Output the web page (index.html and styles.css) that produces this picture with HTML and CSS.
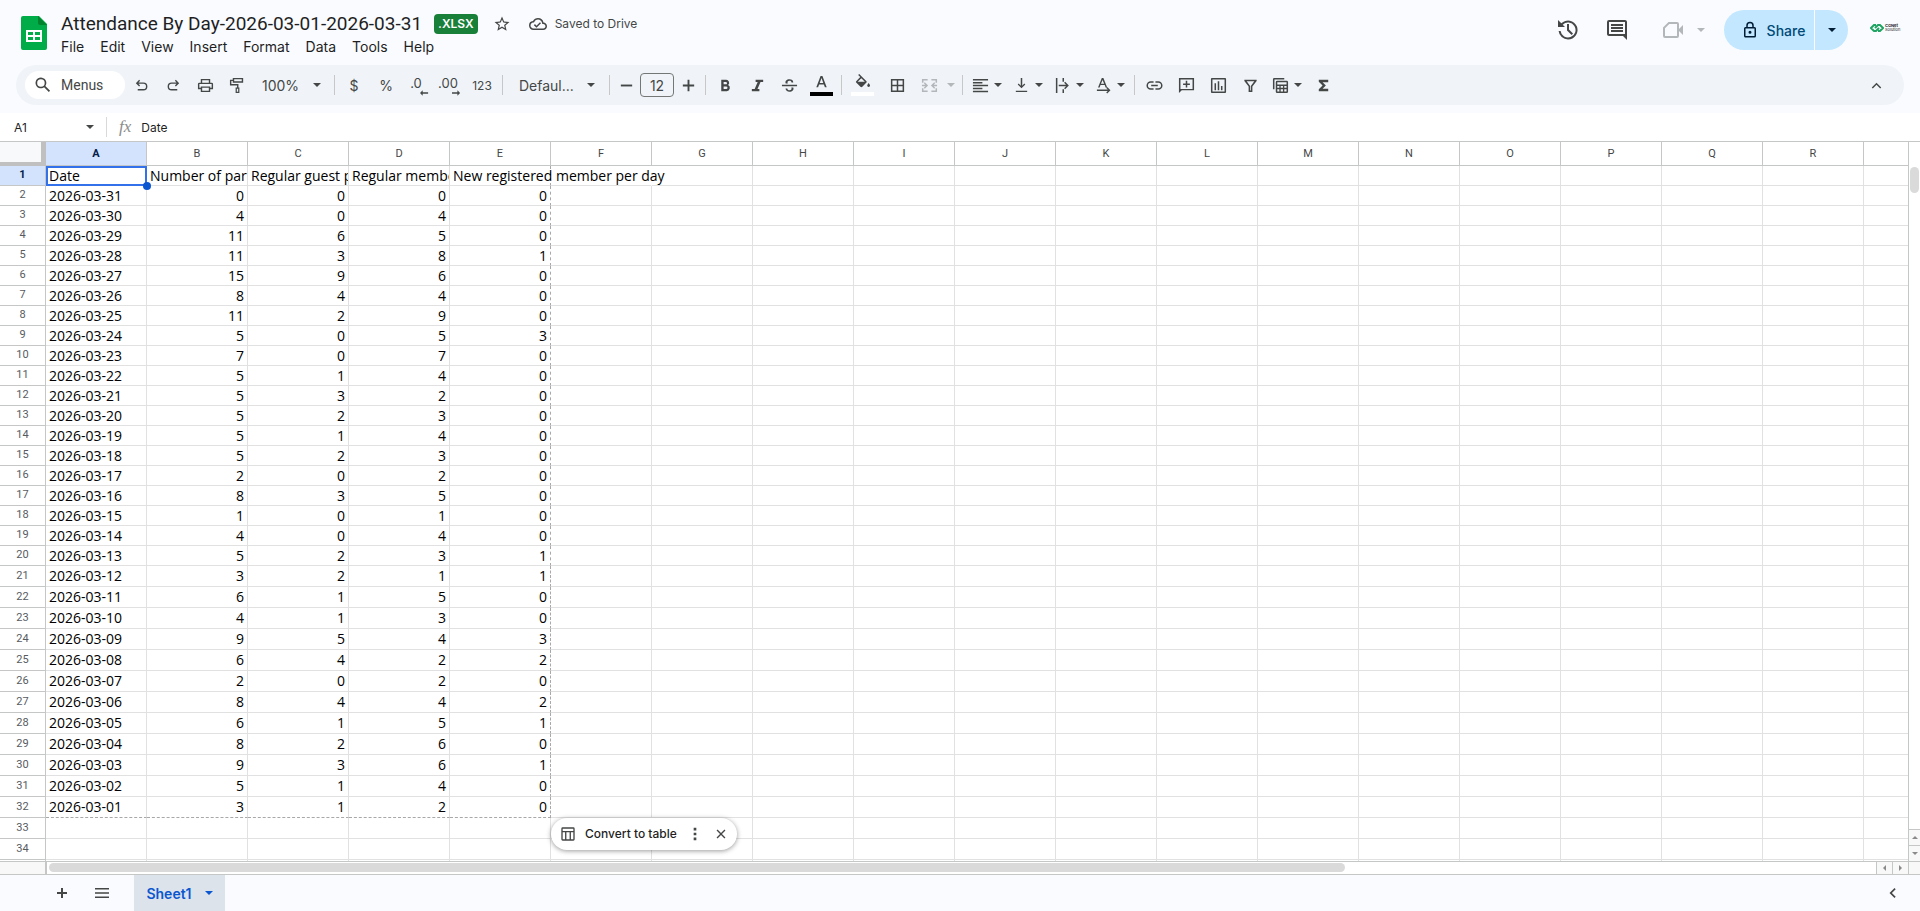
FILE: index.html
```html
<!DOCTYPE html>
<html lang="en">

<head>
    <meta charset="UTF-8">
    <meta name="viewport" content="width=device-width, initial-scale=1.0">
    <title>Attendance By Day-2026-03-01-2026-03-31</title>
    <link rel="stylesheet" href="styles.css">
</head>

<body>

    <header class="top-bar">
        <svg class="sheets-logo" viewBox="0 0 26 34">
            <path fill="#00ac47" d="M2 0h16l8 8v24a2 2 0 0 1-2 2H2a2 2 0 0 1-2-2V2a2 2 0 0 1 2-2z" />
            <path fill="#00832d" d="M17 0l9 9h-7a2 2 0 0 1-2-2z" />
            <path fill="#fff" fill-rule="evenodd" d="M5 14h16v12H5zM7 16v3h5v-3zM14 16v3h5v-3zM7 21v3h5v-3zM14 21v3h5v-3z" />
        </svg>
        <div class="doc-info">
            <div class="title-row">
                <h1>Attendance By Day-2026-03-01-2026-03-31</h1>
                <span class="badge">.XLSX</span>
                <button class="star" aria-label="Star">
                    <svg width="18" height="18" viewBox="0 0 24 24"><path d="M22 9.24l-7.19-.62L12 2 9.19 8.63 2 9.24l5.46 4.73L5.82 21 12 17.27 18.18 21l-1.63-7.03L22 9.24zM12 15.4l-3.76 2.27 1-4.28-3.32-2.88 4.38-.38L12 6.1l1.71 4.04 4.38.38-3.32 2.88 1 4.28L12 15.4z" /></svg>
                </button>
                <svg class="cloud" width="18" height="18" viewBox="0 0 24 24"><path d="M19.35 10.04A7.49 7.49 0 0 0 12 4C9.11 4 6.6 5.64 5.35 8.04A5.994 5.994 0 0 0 0 14c0 3.31 2.69 6 6 6h13c2.76 0 5-2.24 5-5 0-2.64-2.05-4.78-4.65-4.96zM19 18H6c-2.21 0-4-1.79-4-4 0-2.05 1.53-3.76 3.56-3.97l1.07-.11.5-.95A5.469 5.469 0 0 1 12 6c2.62 0 4.88 1.86 5.39 4.43l.3 1.5 1.53.11A2.98 2.98 0 0 1 22 15c0 1.65-1.35 3-3 3zm-9-3.82l-2.09-2.09L6.5 13.5 10 17l6.01-6.01-1.41-1.41z" /></svg>
                <span class="saved">Saved to Drive</span>
            </div>
            <nav class="menu-bar">
                <button>File</button>
                <button>Edit</button>
                <button>View</button>
                <button>Insert</button>
                <button>Format</button>
                <button>Data</button>
                <button>Tools</button>
                <button>Help</button>
            </nav>
        </div>
        <div class="top-actions">
            <button aria-label="Version history">
                <svg width="24" height="24" viewBox="0 0 24 24"><path d="M12 21.5a9.5 9.5 0 0 1-9.4-8.5h2a7.5 7.5 0 1 0 2.1-6.2L9 9H2V2l3.3 3.3A9.5 9.5 0 1 1 12 21.5zM15.6 17L11 12.4V6h2v5.6l4 4z" /></svg>
            </button>
            <button aria-label="Comments">
                <svg width="24" height="24" viewBox="0 0 24 24"><path d="M22 4c0-1.100-.9-2-2-2H4a2 2 0 0 0-2 2v12c0 1.100.9 2 2 2h14l4 4V4zM20 16H4V4h16v12zM6 12h12v2H6zM6 9h12v2H6zM6 6h12v2H6z" /></svg>
            </button>
            <button class="meet" aria-label="Join a call">
                <svg width="24" height="24" viewBox="0 0 24 24"><path d="M7.500 4H16a2 2 0 0 1 2 2v12a2 2 0 0 1-2 2H4a2 2 0 0 1-2-2V9.500zM8.300 6L4 10.300V18h12V6zM18 11l4-4v10l-4-4z" /></svg>
                <i class="caret"></i>
            </button>
            <div class="share">
                <button class="share-main">
                    <svg width="20" height="20" viewBox="0 0 24 24"><path d="M18 8h-1V6A5 5 0 0 0 7 6v2H6a2 2 0 0 0-2 2v10c0 1.100.9 2 2 2h12a2 2 0 0 0 2-2V10a2 2 0 0 0-2-2zM9 6a3 3 0 0 1 6 0v2H9zM18 20H6V10h12zM12 17a2 2 0 1 0 0-4 2 2 0 0 0 0 4z" /></svg>
                    Share
                </button>
                <button class="share-more" aria-label="Share options"><i class="caret"></i></button>
            </div>
            <div class="account">
                <svg width="14" height="8" viewBox="0 0 14 8" fill="none" stroke="#1fa463" stroke-width="2"><path fill="none" d="M6 1H4L1 4l3 3h2l3-3M8 7h2l3-3-3-3H8L5 4" /></svg>
                <p><b>CGNet</b><span>Solution</span></p>
            </div>
        </div>
    </header>

    <div class="toolbar">
        <label class="search">
            <svg width="20" height="20" viewBox="0 0 24 24"><path d="M20.500 19l-5.700-5.700a6.500 6.500 0 1 0-1.500 1.500l5.700 5.700zM9.500 14a4.500 4.500 0 1 1 0-9 4.500 4.500 0 0 1 0 9z" /></svg>
            <input type="text" placeholder="Menus" aria-label="Menus">
        </label>
        <button aria-label="Undo"><svg viewBox="0 0 18 18"><path d="M6.500 3L3 6.500 6.500 10l1-1-1.700-1.750H11a2.750 2.750 0 0 1 0 5.500H5v1.500h6a4.250 4.250 0 0 0 0-8.500H5.800L7.500 4z" /></svg></button>
        <button aria-label="Redo"><svg viewBox="0 0 18 18"><path d="M11.500 3L15 6.500 11.500 10l-1-1 1.700-1.750H7a2.750 2.750 0 0 0 0 5.500h6v1.500H7a4.250 4.250 0 0 1 0-8.500h5.200L10.500 4z" /></svg></button>
        <button aria-label="Print"><svg viewBox="0 0 18 18"><path fill-rule="evenodd" d="M4 2h10v4h1.500A1.500 1.500 0 0 1 17 7.500V13h-3v3H4v-3H1V7.500A1.500 1.500 0 0 1 2.500 6H4zM5.500 3.500V6h7V3.500zM2.500 7.500v4H4V10h10v1.500h1.500v-4zM5.500 11.500v3h7v-3z" /></svg></button>
        <button aria-label="Paint format"><svg viewBox="0 0 18 18"><path fill-rule="evenodd" d="M4 1h11v5H4V4.300H2.500v3.200H10V11h1v6H7v-6h1.500V9H1V2.800h3zM5.500 2.500v2h8v-2zM8.300 12.400v3.200h1.400v-3.200z" /></svg></button>
        <button class="drop zoom">100% <i class="caret"></i></button>
        <hr>
        <button class="text">$</button>
        <button class="text">%</button>
        <button class="text decimal" aria-label="Decrease decimal places">.0<svg viewBox="0 0 10 6"><path d="M0 3l3-3v2.200h6v1.600H3V6z" /></svg></button>
        <button class="text decimal" aria-label="Increase decimal places">.00<svg viewBox="0 0 10 6"><path d="M9 3L6 0v2.200H0v1.600h6V6z" /></svg></button>
        <button class="text small">123</button>
        <hr>
        <button class="drop font">Defaul... <i class="caret"></i></button>
        <hr>
        <button class="step" aria-label="Decrease font size"><svg viewBox="0 0 18 18"><path d="M3 8h12v2H3z" /></svg></button>
        <input class="size" type="text" value="12" aria-label="Font size">
        <button class="step" aria-label="Increase font size"><svg viewBox="0 0 18 18"><path d="M8 3h2v5h5v2h-5v5H8v-5H3V8h5z" /></svg></button>
        <hr>
        <button aria-label="Bold"><svg viewBox="0 0 18 18"><path fill-rule="evenodd" d="M4.500 3h5a3.200 3.200 0 0 1 2.300 5.600A3.400 3.400 0 0 1 10 15H4.500zM7 5.200v2.600h2.300a1.300 1.300 0 0 0 0-2.600zM7 10v2.800h2.700a1.400 1.400 0 0 0 0-2.800z" /></svg></button>
        <button aria-label="Italic"><svg viewBox="0 0 18 18"><path d="M7 3h8v2.200h-2.800l-3.200 7.600H11V15H3v-2.200h3L9.200 5.200H7z" /></svg></button>
        <button aria-label="Strikethrough"><svg viewBox="0 0 18 18"><path d="M1 8.200h16v1.600H1zM5 7c-1-2.500 1-4.500 4-4.500 2.300 0 4 1.200 4 3.200h-1.900C11.100 4.600 10.200 4 9 4 7.200 4 6.400 5.200 7.200 7zM13 11c1 2.500-1 4.500-4 4.500-2.400 0-4.200-1.300-4.200-3.400h1.900c0 1.200 1 1.900 2.300 1.900 1.800 0 2.700-1.300 1.900-3z" /></svg></button>
        <button class="color" aria-label="Text color"><svg viewBox="0 0 18 18"><path fill-rule="evenodd" d="M8 2h2l4.500 12h-1.900l-1.100-3H6.500l-1.100 3H3.500zM9 4.200L7.100 9.400h3.800z" /></svg><span class="swatch black"></span></button>
        <hr>
        <button class="color wide" aria-label="Fill color"><svg viewBox="0 0 18 18"><path fill-rule="evenodd" d="M5.500 0l7.700 7.700a1 1 0 0 1 0 1.400l-4.400 4.400a1.500 1.500 0 0 1-2 0L2.300 9a1 1 0 0 1 0-1.400l4.300-4.300L4.400 1.100zM7.700 4.500L3.900 8.300h7.600zM15.500 9.500c.8 1 1.500 2 1.500 2.700a1.500 1.500 0 0 1-3 0c0-.7.7-1.700 1.500-2.700z" /></svg><span class="swatch white"></span></button>
        <button class="wide" aria-label="Borders"><svg viewBox="0 0 18 18"><path fill-rule="evenodd" d="M2 2h14v14H2zM3.600 3.600v4.600h4.600V3.600zM9.800 3.600v4.600h4.600V3.600zM3.600 9.800v4.600h4.600V9.800zM9.800 9.800v4.600h4.600V9.800z" /></svg></button>
        <button class="combo merge" aria-label="Merge cells" disabled><svg viewBox="0 0 18 18"><path d="M1 2h6v1.600H2.600V6H1zM11 2h6v4h-1.600V3.600H11zM1 12h1.600v2.400H7V16H1zM15.400 12H17v4h-6v-1.600h4.400zM1 8.200h3.500L3 6.600l1-1L7.500 9 4 12.400l-1-1 1.500-1.600H1zM17 8.200h-3.500L15 6.600l-1-1L10.500 9l3.500 3.400 1-1-1.500-1.600H17z" /></svg><i class="caret"></i></button>
        <hr>
        <button class="combo" aria-label="Horizontal align"><svg viewBox="0 0 18 18"><path d="M1 2h16v1.600H1zM1 5.200h10v1.600H1zM1 8.200h16v1.600H1zM1 11.400h10V13H1zM1 14.600h16v1.600H1z" /></svg><i class="caret"></i></button>
        <button class="combo" aria-label="Vertical align"><svg viewBox="0 0 18 18"><path d="M8.200 1h1.600v8.200L12 7l1 1-4 4-4-4 1-1 2.200 2.200zM3 14.500h12V16H3z" /></svg><i class="caret"></i></button>
        <button class="combo" aria-label="Text wrapping"><svg viewBox="0 0 18 18"><path d="M2 1h1.600v16H2zM9 1h1.600v4H9zM9 13h1.600v4H9zM5 8.200h7.700l-2-2 1.100-1.100L15.700 9l-3.900 3.900-1.100-1.100 2-2H5z" /></svg><i class="caret"></i></button>
        <button class="combo" aria-label="Text rotation"><svg viewBox="0 0 18 18"><path fill-rule="evenodd" d="M7.200 1h1.700l4 10h-1.700l-.9-2.400H5.800L4.900 11H3.200zM8 3.200L6.300 7.200h3.400zM2 13.200h11.500l-1.600-1.600 1-1L16.400 14l-3.500 3.400-1-1 1.600-1.600H2z" /></svg><i class="caret"></i></button>
        <hr>
        <button aria-label="Insert link"><svg viewBox="0 0 18 18"><path d="M8 4.500v1.600H5a2.900 2.900 0 0 0 0 5.800h3v1.600H5a4.500 4.500 0 0 1 0-9zM10 4.500h3a4.500 4.500 0 0 1 0 9h-3v-1.600h3a2.900 2.900 0 0 0 0-5.800h-3zM5.500 8.200h7v1.600h-7z" /></svg></button>
        <button aria-label="Insert comment"><svg viewBox="0 0 18 18"><path fill-rule="evenodd" d="M1 1h16v13H4l-3 3zM2.600 2.600v10h12.800v-10zM8.200 4h1.600v2.800h2.800v1.600H9.800v2.800H8.200V8.400H5.400V6.800h2.800z" /></svg></button>
        <button aria-label="Insert chart"><svg viewBox="0 0 18 18"><path fill-rule="evenodd" d="M2 1h14a1 1 0 0 1 1 1v14a1 1 0 0 1-1 1H2a1 1 0 0 1-1-1V2a1 1 0 0 1 1-1zM2.600 2.600v12.800h12.800V2.600zM4.800 6.500h1.600V14H4.800zM8.200 4.500h1.600V14H8.200zM11.600 9.500h1.600V14h-1.600z" /></svg></button>
        <button aria-label="Create a filter"><svg viewBox="0 0 18 18"><path fill-rule="evenodd" d="M2.500 3h13v1.300L11 10v6H7v-6L2.500 4.300zM5 4.600l3.600 4.800V14.400h.8V9.400L13 4.600z" /></svg></button>
        <button class="combo" aria-label="Table views"><svg viewBox="0 0 18 18"><path fill-rule="evenodd" d="M1 13V2.500A1.500 1.500 0 0 1 2.500 1H13v1.600H2.600V13zM5.500 4h10A1.500 1.500 0 0 1 17 5.500v10a1.500 1.500 0 0 1-1.500 1.500h-10A1.500 1.500 0 0 1 4 15.500v-10A1.500 1.500 0 0 1 5.500 4zM5.600 5.600V8h9.800V5.600zM5.600 9.400v2h2.200v-2zM9.200 9.400v2h2.400v-2zM13 9.400v2h2.400v-2zM5.600 12.900v2.500h2.200v-2.500zM9.200 12.900v2.500h2.400v-2.500zM13 12.900v2.500h2.400v-2.500z" /></svg><i class="caret"></i></button>
        <button aria-label="Functions"><svg viewBox="0 0 18 18"><path d="M4 3h10v2.600H8L11.500 9 8 12.400h6V15H4v-2L8 9 4 5z" /></svg></button>
        <button class="hide-menus" aria-label="Hide the menus"><svg viewBox="0 0 18 18"><path d="M9 6l5 5-1.100 1.100L9 8.200l-3.900 3.900L4 11z" /></svg></button>
    </div>

    <div class="formula-bar">
        <input class="name-box" type="text" value="A1" aria-label="Name box">
        <button aria-label="Named ranges"><i class="caret"></i></button>
        <label class="fx" for="formula">fx</label>
        <input class="formula" id="formula" type="text" value="Date">
    </div>

    <main class="sheet">
        <div class="grid">
            <table id="cells"></table>
        </div>
        <div class="v-scroll">
            <div class="v-thumb"></div>
            <button class="up" aria-label="Scroll up"></button>
            <button class="down" aria-label="Scroll down"></button>
        </div>
    </main>

    <div class="h-scroll">
        <div class="h-track"><div class="h-thumb"></div></div>
        <button class="left" aria-label="Scroll left"></button>
        <button class="right" aria-label="Scroll right"></button>
        <span class="corner"></span>
    </div>

    <footer class="tabs">
        <button aria-label="Add sheet"><svg viewBox="0 0 18 18"><path d="M8 4h2v4h4v2h-4v4H8v-4H4V8h4z" /></svg></button>
        <button aria-label="All sheets"><svg viewBox="0 0 18 18"><path d="M2 4h14v1.600H2zM2 8.200h14v1.600H2zM2 12.400h14V14H2z" /></svg></button>
        <button class="tab">Sheet1 <i class="caret"></i></button>
        <button class="side-panel" aria-label="Show side panel"><svg viewBox="0 0 18 18"><path d="M11.500 4l1.200 1.200L8.900 9l3.800 3.800-1.200 1.200L6.500 9z" /></svg></button>
    </footer>

    <template id="convert">
        <div class="convert">
            <button class="convert-main">
                <svg viewBox="0 0 18 18"><path fill-rule="evenodd" d="M3 1.500h12A1.500 1.500 0 0 1 16.500 3v12a1.500 1.500 0 0 1-1.500 1.500H3A1.500 1.500 0 0 1 1.500 15V3A1.500 1.500 0 0 1 3 1.500zM3 3v2.600h12V3zM3 7.100V15h2.700V7.100zM7.200 7.100V15h3.600V7.100zM12.300 7.100V15H15V7.100z" /></svg>
                Convert to table
            </button>
            <button aria-label="More options"><svg viewBox="0 0 18 18"><path d="M7.500 2h3v3h-3zM7.500 7.500h3v3h-3zM7.500 13h3v3h-3z" /></svg></button>
            <button aria-label="Close"><svg viewBox="0 0 18 18"><path d="M5.100 4L9 7.900 12.900 4 14 5.100 10.100 9l3.900 3.900-1.100 1.100L9 10.100 5.100 14 4 12.900 7.900 9 4 5.100z" /></svg></button>
        </div>
    </template>

    <script>
        const headings = ['Date', 'Number of part', 'Regular guest p', 'Regular membe', 'New registered member per day'];

        // one entry per day, newest first: participants, guests, members, new members
        const days = [
            [0, 0, 0, 0], [4, 0, 4, 0], [11, 6, 5, 0], [11, 3, 8, 1], [15, 9, 6, 0],
            [8, 4, 4, 0], [11, 2, 9, 0], [5, 0, 5, 3], [7, 0, 7, 0], [5, 1, 4, 0],
            [5, 3, 2, 0], [5, 2, 3, 0], [5, 1, 4, 0], [5, 2, 3, 0], [2, 0, 2, 0],
            [8, 3, 5, 0], [1, 0, 1, 0], [4, 0, 4, 0], [5, 2, 3, 1], [3, 2, 1, 1],
            [6, 1, 5, 0], [4, 1, 3, 0], [9, 5, 4, 3], [6, 4, 2, 2], [2, 0, 2, 0],
            [8, 4, 4, 2], [6, 1, 5, 1], [8, 2, 6, 0], [9, 3, 6, 1], [5, 1, 4, 0],
            [3, 1, 2, 0]
        ];
        const rows = [headings].concat(days.map((day, i) => ['2026-03-' + String(31 - i).padStart(2, '0'), ...day]));
        // the last column has no letter, it fills what is left of the window
        const letters = 'ABCDEFGHIJKLMNOPQR'.split('').concat('');
        const rowCount = 34;
        const table = document.getElementById('cells');

        let html = '<thead><tr><td class="select-all"></td>';
        letters.forEach((letter, i) => {
            const cls = i === 0 ? 'active' : letter === '' ? 'rest' : '';
            html += `<th scope="col" class="${cls}">${letter}</th>`;
        });
        html += '</tr></thead><tbody>';

        for (let r = 0; r <= rowCount; r++) {
            const row = rows[r] || [];
            html += `<tr${r >= 20 ? ' class="tall"' : ''}><th scope="row"${r === 0 ? ' class="active"' : ''}>${r < rowCount ? r + 1 : ''}</th>`;
            letters.forEach((letter, c) => {
                const value = row[c] === undefined ? '' : row[c];
                const classes = [];
                if (typeof value === 'number') classes.push('num');
                if (r < rows.length && c === 4) classes.push('edge-right');
                if (r === rows.length - 1 && c < 5) classes.push('edge-bottom');
                if (r === 0 && c === 0) classes.push('selected');
                if (r === 0 && c === 4) classes.push('spill');
                if (r === 0 && c === 5) classes.push('spilled-on');
                if (r === rows.length && c === 5) classes.push('anchor');
                html += `<td class="${classes.join(' ')}">${value}</td>`;
            });
            html += '</tr>';
        }
        table.innerHTML = html + '</tbody>';
        table.querySelector('.anchor').append(document.getElementById('convert').content.cloneNode(true));
    </script>

</body>

</html>
```

FILE: styles.css
```css
* {
    box-sizing: border-box;
}

body {
    margin: 0;
    height: 100vh;
    display: flex;
    flex-direction: column;
    overflow: hidden;
    background-color: #f9fbff;
    color: #1f1f1f;
    font-family: Inter, Roboto, sans-serif;
    font-size: 14px;
}

button {
    display: flex;
    align-items: center;
    justify-content: center;
    padding: 0;
    border: none;
    background: none;
    color: inherit;
    font: inherit;
    cursor: pointer;
}

input {
    min-width: 0;
    border: none;
    outline: none;
    background: none;
    color: inherit;
    font: inherit;
}

svg {
    flex: none;
    fill: #444746;
}

.caret {
    flex: none;
    border: 4px solid transparent;
    border-top-color: currentColor;
    border-bottom: none;
}

/* title and menus */
.top-bar {
    display: flex;
    flex: none;
    height: 65px;
    padding-left: 21px;
}

.sheets-logo {
    width: 26px;
    height: 34px;
    margin-top: 16px;
}

.doc-info {
    margin: 11px 0 0 14px;
}

.title-row {
    display: flex;
    align-items: center;
    height: 25px;
}

.title-row h1 {
    margin: 0 12px 0 0;
    font-family: Roboto, sans-serif;
    font-size: 19px;
    font-weight: 400;
}

.badge {
    height: 20px;
    padding: 0 4px;
    border-radius: 4px;
    background-color: #188038;
    color: #fff;
    font-size: 12px;
    font-weight: 600;
    line-height: 20px;
}

.star {
    margin: 0 18px 0 15px;
}

.saved {
    margin-left: 8px;
    color: #444746;
    font-size: 12px;
}

.menu-bar {
    display: flex;
    gap: 16px;
    height: 20px;
}

.top-actions {
    display: flex;
    align-items: center;
    height: 60px;
    margin-left: auto;
    padding-right: 21px;
}

.top-actions > button {
    width: 49px;
    height: 40px;
}

.top-actions .meet {
    width: 66px;
    gap: 12px;
    margin: 0 8px 0 9px;
    color: #b4b7b9;
}

.meet svg {
    fill: currentColor;
}

.share {
    display: flex;
    gap: 1px;
    height: 40px;
    color: #004a77;
}

.share button {
    background-color: #c2e7ff;
}

.share-main {
    gap: 8px;
    width: 90px;
    padding-left: 8px;
    border-radius: 20px 0 0 20px;
    font-weight: 500;
}

.share svg {
    width: 18px;
    fill: #001d35;
}

.share-more {
    width: 33px;
    border-radius: 0 20px 20px 0;
    color: #001d35;
}

.account {
    display: flex;
    align-items: center;
    gap: 1px;
    height: 10px;
    margin: 0 0 4px 22px;
}

.account p {
    width: 14px;
    margin: 0;
    font-size: 4px;
    line-height: 4px;
}

.account b,
.account span {
    display: block;
}

/* toolbar */
.toolbar {
    display: flex;
    flex: none;
    align-items: center;
    height: 40px;
    margin: 0 16px 8px;
    padding-left: 9px;
    border-radius: 20px;
    background-color: #f0f4f9;
    color: #444746;
}

.search {
    display: flex;
    flex: none;
    align-items: center;
    gap: 8px;
    width: 100px;
    height: 28px;
    padding-left: 8px;
    border-radius: 14px;
    background-color: #fff;
    font-family: Roboto, sans-serif;
}

.search input::placeholder {
    color: #444746;
    opacity: 1;
}

.search input {
    width: 60px;
    padding: 0;
}

.toolbar > button {
    flex: none;
    width: 32px;
    height: 28px;
}

.toolbar > button svg {
    width: 17px;
}

.toolbar hr {
    flex: none;
    width: 1px;
    height: 20px;
    margin: 0 3px 0 4px;
    border: none;
    background-color: #c7c7c7;
}

.toolbar > .drop {
    justify-content: space-between;
    padding: 0 9px;
}

.toolbar > .zoom {
    width: 77px;
}

.toolbar > .font {
    width: 99px;
    padding: 0 10px 0 13px;
}

.toolbar .small {
    font-size: 12px;
}

.toolbar .decimal {
    position: relative;
    align-items: flex-start;
    padding: 4px 4px 0 0;
    font-size: 13px;
    line-height: 16px;
}

.toolbar > .decimal svg {
    position: absolute;
    right: 5px;
    bottom: 3px;
    width: 9px;
    height: 6px;
}

.toolbar > .step {
    width: 26px;
}

.size {
    flex: none;
    width: 34px;
    height: 24px;
    margin: 0 1px;
    padding: 0;
    border: 1px solid #747775;
    border-radius: 4px;
    text-align: center;
}

.toolbar > .color {
    flex-direction: column;
    gap: 1px;
}

.color svg {
    height: 17px;
}

.swatch {
    width: 23px;
    height: 4px;
}

.black {
    background-color: #000;
}

.white {
    background-color: #fff;
}

.toolbar > .wide {
    width: 35px;
}

.toolbar > .combo {
    justify-content: flex-start;
    gap: 5px;
    width: 41px;
    padding-left: 6px;
}

.toolbar > .merge {
    gap: 9px;
    width: 43px;
    opacity: 0.35;
}

.toolbar > .hide-menus {
    margin-left: auto;
    margin-right: 12px;
}

/* formula bar */
.formula-bar {
    display: flex;
    flex: none;
    align-items: center;
    height: 28px;
    background-color: #fff;
    font-size: 12px;
}

.name-box {
    width: 80px;
    padding: 0 0 0 14px;
}

.formula-bar button {
    width: 20px;
    color: #444746;
}

.fx {
    margin-left: 6px;
    padding-left: 12px;
    border-left: 1px solid #d9d9d9;
    color: #8c8c8c;
    font-family: "Liberation Serif", serif;
    font-size: 17px;
    font-style: italic;
}

.formula {
    flex: 1;
    padding: 0 0 0 10px;
}

/* cells */
.sheet {
    display: flex;
    flex: 1;
    min-height: 0;
    border-top: 1px solid #c4c7c5;
    border-bottom: 1px solid #c4c7c5;
    background-color: #fff;
}

.grid {
    flex: 1;
    min-width: 0;
    overflow: hidden;
}

table {
    width: 100%;
    table-layout: fixed;
    border-collapse: separate;
    border-spacing: 0;
}

th {
    height: 20px;
    padding: 0;
    border: solid #c4c7c5;
    border-width: 0 1px 1px 0;
    background-color: #fff;
    color: #575b5f;
    font-family: Roboto, sans-serif;
    font-size: 11px;
    font-weight: 400;
    line-height: 16px;
}

thead th {
    width: 101px;
    height: 24px;
    color: #444746;
}

thead .rest {
    width: auto;
}

tbody th {
    padding-bottom: 1px;
}

.tall th {
    height: 21px;
}

th.active {
    background-color: #d3e3fd;
    color: #041e49;
    font-weight: 700;
}

th:last-child,
td:last-child {
    border-right: none;
}

td {
    padding: 0 3px;
    border: solid #e1e1e1;
    border-width: 0 1px 1px 0;
    overflow: hidden;
    color: #000;
    font-family: "Open Sans", sans-serif;
    font-size: 14px;
    line-height: 18px;
    white-space: nowrap;
}

td.select-all {
    width: 46px;
    border: solid #c0c0c0;
    border-width: 0 5px 4px 0;
    background-color: #f8f9fa;
}

.num {
    text-align: right;
}

.edge-right {
    border-right: 1px dashed #a8a8a8;
}

.edge-bottom {
    border-bottom: 1px dashed #a8a8a8;
}

.spill {
    overflow: visible;
}

.spilled-on {
    border-right-color: transparent;
}

.selected {
    position: relative;
    overflow: visible;
    outline: 2px solid #3271ea;
    outline-offset: -2px;
}

/* fill handle */
.selected::after {
    content: "";
    position: absolute;
    right: -5px;
    bottom: -5px;
    width: 8px;
    height: 8px;
    border-radius: 50%;
    background-color: #0b57d0;
}

.anchor {
    position: relative;
    overflow: visible;
}

.convert {
    position: absolute;
    top: 0;
    left: 0;
    display: flex;
    align-items: center;
    height: 32px;
    padding: 0 3px 0 9px;
    border-radius: 16px;
    background-color: #fff;
    box-shadow: 0 1px 5px rgba(0, 0, 0, 0.4);
    color: #1f1f1f;
    font-family: Inter, sans-serif;
    font-size: 12px;
    font-weight: 500;
}

.convert svg {
    width: 16px;
}

.convert button {
    width: 26px;
}

.convert .convert-main {
    gap: 9px;
    width: auto;
    margin-right: 5px;
}

/* scrollbars */
.v-scroll {
    display: flex;
    flex: none;
    flex-direction: column;
    width: 12px;
    padding-top: 23px;
    border-left: 1px solid #c4c7c5;
}

.v-thumb {
    height: 26px;
    margin: 2px 1px auto;
    border-radius: 5px;
    background-color: #dadada;
}

.v-scroll button {
    height: 16px;
    border-top: 1px solid #c4c7c5;
    background-color: #f8f8f8;
}

.h-scroll {
    display: flex;
    flex: none;
    height: 13px;
    padding-left: 45px;
    border-bottom: 1px solid #c4c7c5;
    background-color: #f8f8f8;
}

.h-track {
    flex: 1;
    padding: 1px 2px;
    border-left: 2px solid #c4c7c5;
    background-color: #fff;
}

.h-thumb {
    width: 71%;
    height: 9px;
    border-radius: 5px;
    background-color: #dadada;
}

.h-scroll button,
.corner {
    width: 16px;
    border-left: 1px solid #c4c7c5;
}

.corner {
    width: 12px;
}

.up::after,
.down::after,
.left::after,
.right::after {
    content: "";
    border: 3px solid transparent;
}

.up::after {
    border-bottom-color: #8a8a8a;
    border-top: none;
}

.down::after {
    border-top-color: #8a8a8a;
    border-bottom: none;
}

.left::after {
    border-right-color: #8a8a8a;
    border-left: none;
}

.right::after {
    border-left-color: #8a8a8a;
    border-right: none;
}

/* sheet tabs */
.tabs {
    display: flex;
    flex: none;
    height: 36px;
    padding-left: 42px;
}

.tabs button {
    width: 40px;
}

.tabs button svg {
    width: 18px;
}

.tabs .tab {
    gap: 13px;
    width: 91px;
    margin-left: 12px;
    background-color: #dde3eb;
    color: #0b57d0;
    font-weight: 600;
}

.tabs .side-panel {
    margin-left: auto;
    margin-right: 8px;
}
```
